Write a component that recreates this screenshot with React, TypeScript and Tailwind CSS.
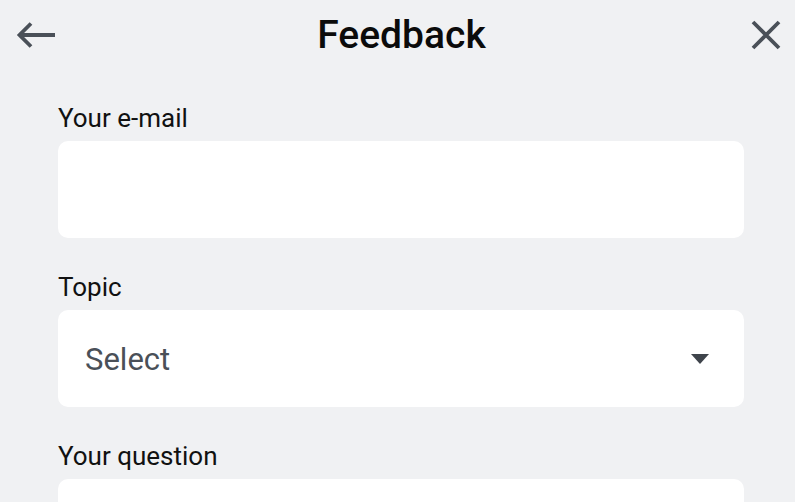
const Field = ({ label, children }: { label: string; children?: React.ReactNode }) => (
  <div className="flex flex-col">
    <div className="text-[26px] leading-[30px] text-[#111] mb-[8px]">{label}</div>
    <div className="h-[97px] bg-white rounded-[10px] flex items-center">{children}</div>
  </div>
);

const App = () => {
  return (
    <div className="w-[795px] h-[502px] overflow-hidden bg-[#f0f1f3] font-['Roboto',sans-serif]">
      {/* Header */}
      <div className="h-[70px] flex items-center justify-between pl-[16px] pr-[14px]">
        <svg width="40" height="28" viewBox="0 0 40 28" className="text-[#4a5058]">
          <path d="M39 14 H4 M15 2.5 L3.5 14 L15 25.5" fill="none" stroke="currentColor" strokeWidth="3.8" />
        </svg>
        <h1 className="text-[39px] font-medium text-[#0b0b0b] mr-[4px]">Feedback</h1>
        <svg width="30" height="30" viewBox="0 0 30 30" className="text-[#4a5058]">
          <path d="M2 2 L28 28 M28 2 L2 28" fill="none" stroke="currentColor" strokeWidth="3.8" />
        </svg>
      </div>

      <div className="pl-[58px] pr-[51px] flex flex-col gap-[34px] mt-[33px]">
        <Field label="Your e-mail" />
        <Field label="Topic">
          <div className="flex-1 flex items-center justify-between pl-[27px] pr-[35px]">
            <span className="text-[31px] text-[#4a5058] pt-[3px]">Select</span>
            <svg width="18" height="10" viewBox="0 0 18 10">
              <path d="M0 0 H18 L9 10 Z" fill="#3f444b" />
            </svg>
          </div>
        </Field>
        <Field label="Your question" />
      </div>
    </div>
  );
};

export default App;
